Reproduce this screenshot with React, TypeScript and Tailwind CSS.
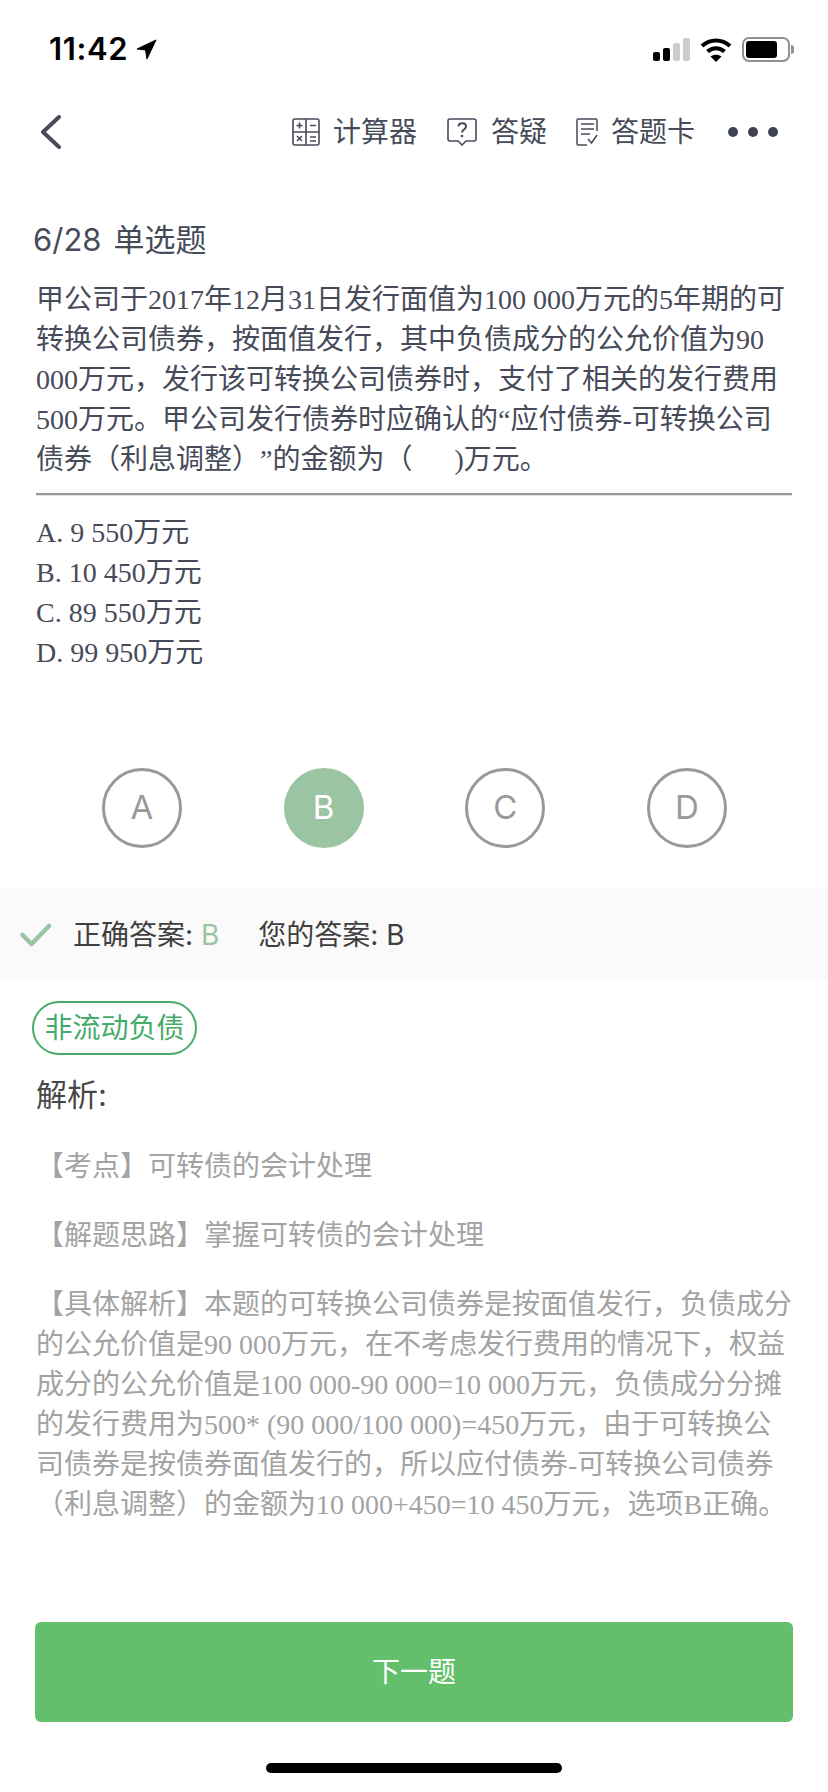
const sans = "[font-family:Inter,'Noto_Sans_CJK_SC',sans-serif]"

const questionLines = [
  "甲公司于2017年12月31日发行面值为100 000万元的5年期的可",
  "转换公司债券，按面值发行，其中负债成分的公允价值为90",
  "000万元，发行该可转换公司债券时，支付了相关的发行费用",
  "500万元。甲公司发行债券时应确认的“应付债券-可转换公司",
  "债券（利息调整）”的金额为（\u00a0\u00a0\u00a0\u00a0\u00a0\u00a0)万元。",
]

const optionLines = ["A. 9 550万元", "B. 10 450万元", "C. 89 550万元", "D. 99 950万元"]

const analysisLines = [
  "【具体解析】本题的可转换公司债券是按面值发行，负债成分",
  "的公允价值是90 000万元，在不考虑发行费用的情况下，权益",
  "成分的公允价值是100 000-90 000=10 000万元，负债成分分摊",
  "的发行费用为500* (90 000/100 000)=450万元，由于可转换公",
  "司债券是按债券面值发行的，所以应付债券-可转换公司债券",
  "（利息调整）的金额为10 000+450=10 450万元，选项B正确。",
]

function CalcIcon() {
  return (
    <svg width="28" height="28" viewBox="0 0 28 28" fill="none" stroke="#474b59" strokeWidth="1.6">
      <rect x="1" y="1" width="26" height="26" rx="2" />
      <path d="M14 1v26M1 14h26" />
      <path d="M4.500 7.500h6M7.500 4.500v6M18 7.500h6M5 18l5 5M10 18l-5 5M18 19h6M18 23h6" />
    </svg>
  )
}

function AskIcon() {
  return (
    <svg width="30" height="28" viewBox="0 0 30 28" fill="none" stroke="#474b59" strokeWidth="1.6">
      <path d="M3 1h24a2 2 0 0 1 2 2v18a2 2 0 0 1-2 2h-8l-4 4-4-4H3a2 2 0 0 1-2-2V3a2 2 0 0 1 2-2z" />
      <path d="M11.500 8.500c0-4.500 7.500-4.500 7.500 0 0 3-4 3-4 6" strokeWidth="2" />
      <circle cx="15" cy="18" r="1.300" fill="#474b59" stroke="none" />
    </svg>
  )
}

function CardIcon() {
  return (
    <svg width="22" height="28" viewBox="0 0 22 28" fill="none" stroke="#474b59" strokeWidth="1.500">
      <path d="M21 13V2a1 1 0 0 0-1-1H2a1 1 0 0 0-1 1v24a1 1 0 0 0 1 1h9" />
      <path d="M5 6h13M5 11h13M5 16h9" />
      <path d="M12 21l3.500 4L21 17" />
    </svg>
  )
}

function StatusBar() {
  return (
    <div className="flex h-[90px] items-start justify-between pl-[49px] pr-[34px] pt-[31px]">
      <div className="flex items-center gap-[8px]">
        <span className="font-['Inter',sans-serif] text-[31px] leading-[36px] font-semibold tracking-[0.6px] text-black">11:42</span>
        <svg width="21" height="21" viewBox="0 0 22 22" className="mt-[1px]">
          <path d="M21 1 1 10.500l9 1 1.500 9.500z" fill="#000" stroke="#000" strokeLinejoin="round" />
        </svg>
      </div>
      <div className="mt-[6px] flex items-center gap-[10px]">
        <div className="flex items-end gap-[3px]">
          <div className="h-[9px] w-[7px] rounded-[2px] bg-black" />
          <div className="h-[13px] w-[7px] rounded-[2px] bg-black" />
          <div className="h-[18px] w-[7px] rounded-[2px] bg-[#cccccc]" />
          <div className="h-[23px] w-[7px] rounded-[2px] bg-[#cccccc]" />
        </div>
        <svg width="32" height="24" viewBox="0 0 32 24" fill="none" stroke="#000" strokeWidth="4">
          <path d="M2 8c8-7.500 20-7.500 28 0" />
          <path d="M7.500 13.500c5-4.500 12-4.500 17 0" />
          <path d="M16 24l-5.500-5.500c3-2.500 8-2.500 11 0z" fill="#000" stroke="none" />
        </svg>
        <div className="flex items-center gap-[1px]">
          <div className="flex h-[25px] w-[48px] items-center rounded-[7px] border-2 border-[#909090] pl-[2px]">
            <div className="h-[17px] w-[31px] rounded-[3px] bg-black" />
          </div>
          <div className="h-[9px] w-[3px] rounded-r-full bg-[#909090]" />
        </div>
      </div>
    </div>
  )
}

function NavBar() {
  return (
    <div className={`flex h-[84px] items-center justify-between pl-[40px] pr-[50px] text-[28px] text-[#474b59] ${sans}`}>
      <svg width="22" height="34" viewBox="0 0 22 34" fill="none" stroke="#474b59" strokeWidth="4" strokeLinecap="round" strokeLinejoin="round">
        <path d="M19 2 3 17l16 15" />
      </svg>
      <div className="flex items-center">
        <CalcIcon />
        <span className="ml-[13px] leading-[30px]">计算器</span>
        <span className="ml-[30px] flex"><AskIcon /></span>
        <span className="ml-[14px] leading-[30px]">答疑</span>
        <span className="ml-[29px] flex"><CardIcon /></span>
        <span className="ml-[13px] leading-[30px]">答题卡</span>
        <div className="ml-[33px] flex gap-[10px]">
          <div className="size-[10px] rounded-full bg-[#3f4252]" />
          <div className="size-[10px] rounded-full bg-[#3f4252]" />
          <div className="size-[10px] rounded-full bg-[#3f4252]" />
        </div>
      </div>
    </div>
  )
}

function Choice({ label, selected }: { label: string; selected?: boolean }) {
  return (
    <div
      className={`flex size-[80px] items-center justify-center rounded-full text-[33px] ${sans} ${
        selected ? "bg-[#9bc4a2] text-white" : "border-[3px] border-[#999999] text-[#999999]"
      }`}
    >
      {label}
    </div>
  )
}

export default function App() {
  return (
    <div className="flex h-[1792px] w-[828px] flex-col overflow-hidden bg-white">
      <StatusBar />
      <NavBar />

      <div className={`mt-[46px] flex gap-[12px] pl-[33px] text-[31px] leading-[40px] text-[#474b59] ${sans}`}>
        <span>6/28</span>
        <span>单选题</span>
      </div>

      <div className="mt-[20px] px-[36px] font-['Liberation_Serif','Noto_Sans_CJK_SC',serif] text-[28px] leading-[40px] whitespace-nowrap text-[#474b59] [text-spacing-trim:space-all]">
        {questionLines.map((line) => (
          <div key={line}>{line}</div>
        ))}
      </div>

      <div className="mx-[36px] mt-[13px] h-[3px] border-b border-[#e0e0e0] bg-[#999999]" />

      <div className="mt-[17px] px-[36px] font-['Liberation_Serif','Noto_Sans_CJK_SC',serif] text-[28px] leading-[40px] text-[#474b59]">
        {optionLines.map((line) => (
          <div key={line}>{line}</div>
        ))}
      </div>

      <div className="mt-[95px] flex justify-between pl-[102px] pr-[101px]">
        <Choice label="A" />
        <Choice label="B" selected />
        <Choice label="C" />
        <Choice label="D" />
      </div>

      <div className={`mt-[40px] flex h-[93px] items-center bg-[#fafafa] pl-[20px] text-[28px] text-[#3f3f3f] ${sans}`}>
        <svg width="32" height="24" viewBox="0 0 32 24" fill="none" stroke="#9bc4a2" strokeWidth="4.500" strokeLinecap="round" strokeLinejoin="round">
          <path d="M2.500 12l9 9L29 3" />
        </svg>
        <span className="ml-[21px]">正确答案: <span className="text-[#9bc4a2]">B</span></span>
        <span className="ml-[39px]">您的答案: B</span>
      </div>

      <div className={`mt-[20px] ml-[32px] flex h-[54px] w-[165px] items-center justify-center rounded-[27px] border-2 border-[#45ab68] text-[28px] text-[#45ab68] ${sans}`}>
        非流动负债
      </div>

      <div className={`mt-[20px] pl-[36px] text-[31px] leading-[40px] text-[#474747] ${sans}`}>解析:</div>

      <div className="mt-[32px] px-[36px] font-['Liberation_Serif','Noto_Sans_CJK_SC',serif] text-[28px] leading-[40px] whitespace-nowrap text-[#a3a3a3] [text-spacing-trim:space-all]">
        <p>【考点】可转债的会计处理</p>
        <p className="mt-[29px]">【解题思路】掌握可转债的会计处理</p>
        <div className="mt-[29px]">
          {analysisLines.map((line) => (
            <div key={line}>{line}</div>
          ))}
        </div>
      </div>

      <div className="mx-[35px] mt-[97px] flex h-[100px] items-center justify-center rounded-[6px] bg-[#63bf6b]">
        <span className={`text-[28px] text-white ${sans}`}>下一题</span>
      </div>

      <div className="mx-auto mt-[41px] h-[10px] w-[296px] rounded-full bg-black" />
    </div>
  )
}
